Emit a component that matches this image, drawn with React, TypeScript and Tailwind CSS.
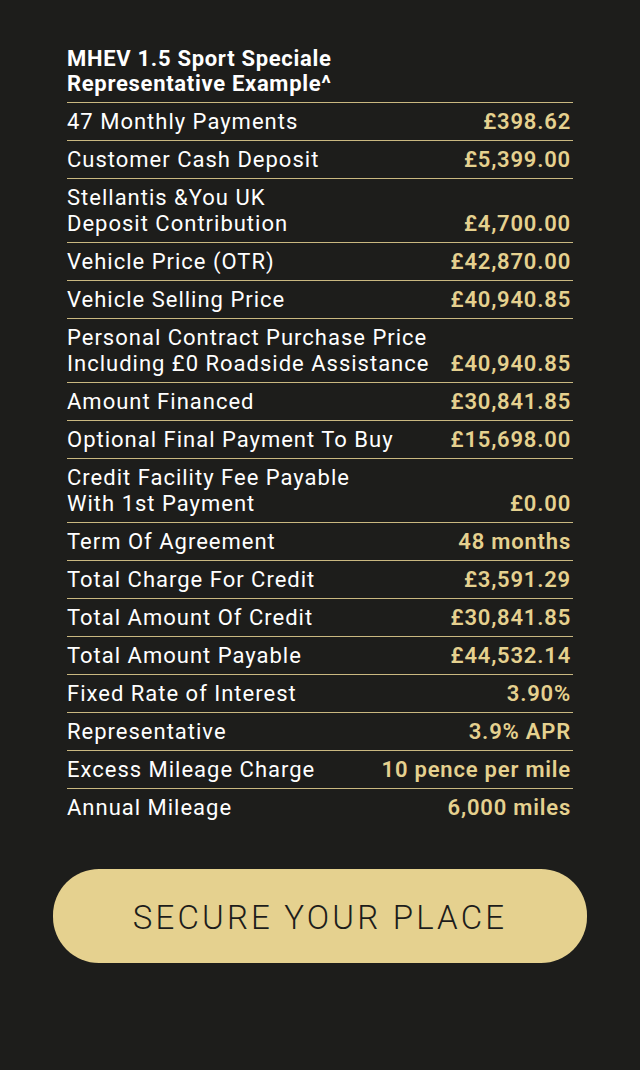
import React from 'react';

const rows: { label: string[]; value: string }[] = [
  { label: ['47 Monthly Payments'], value: '£398.62' },
  { label: ['Customer Cash Deposit'], value: '£5,399.00' },
  { label: ['Stellantis &You UK', 'Deposit Contribution'], value: '£4,700.00' },
  { label: ['Vehicle Price (OTR)'], value: '£42,870.00' },
  { label: ['Vehicle Selling Price'], value: '£40,940.85' },
  { label: ['Personal Contract Purchase Price', 'Including £0 Roadside Assistance'], value: '£40,940.85' },
  { label: ['Amount Financed'], value: '£30,841.85' },
  { label: ['Optional Final Payment To Buy'], value: '£15,698.00' },
  { label: ['Credit Facility Fee Payable', 'With 1st Payment'], value: '£0.00' },
  { label: ['Term Of Agreement'], value: '48 months' },
  { label: ['Total Charge For Credit'], value: '£3,591.29' },
  { label: ['Total Amount Of Credit'], value: '£30,841.85' },
  { label: ['Total Amount Payable'], value: '£44,532.14' },
  { label: ['Fixed Rate of Interest'], value: '3.90%' },
  { label: ['Representative'], value: '3.9% APR' },
  { label: ['Excess Mileage Charge'], value: '10 pence per mile' },
  { label: ['Annual Mileage'], value: '6,000 miles' },
];

export default function App() {
  return (
    <div className="min-h-[1070px] w-[640px] bg-[#1d1d1b] font-['Roboto',sans-serif]">
      <div className="px-[67px] pt-[46px]">
        {/* Heading */}
        <h2 className="pb-[6px] text-[22px] font-bold leading-[25px] tracking-[0.7px] text-white">
          MHEV 1.5 Sport Speciale
          <br />
          Representative Example^
        </h2>

        {/* Finance rows */}
        <div>
          {rows.map((row, i) => (
            <div
              key={i}
              className="flex items-end justify-between gap-2 border-t-[1.5px] border-[#c9b880] pb-[5px] pt-[6px]"
            >
              <div className="whitespace-nowrap text-[22px] leading-[26px] tracking-[1px] text-white">
                {row.label.map((l, j) => (
                  <div key={j}>{l}</div>
                ))}
              </div>
              <div className="whitespace-nowrap pr-[2px] text-[22px] font-semibold leading-[26px] tracking-[0.8px] text-[#e5d18f]">
                {row.value}
              </div>
            </div>
          ))}
        </div>
      </div>

      {/* CTA */}
      <div className="px-[53px] pt-[43px]">
        <button className="flex h-[94px] w-full items-center justify-center rounded-[46px] bg-[#e5d18f] pt-[3px] text-[33px] font-light tracking-[3.2px] text-[#1d1d1b]">
          SECURE YOUR PLACE
        </button>
      </div>
    </div>
  );
}
